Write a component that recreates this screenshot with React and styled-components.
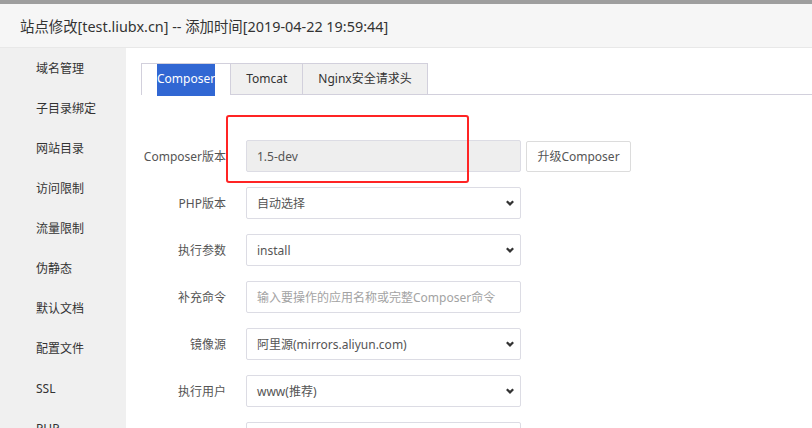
import React from "react";
import styled, { createGlobalStyle } from "styled-components";

const GlobalStyle = createGlobalStyle`
    html, body {
        margin: 0;
        padding: 0;
        height: 428px;
        overflow: hidden;
        background: #fff;
        font-family: "Noto Sans", "Noto Sans CJK SC", sans-serif;
    }
`

const Window = styled.div`
    width: 812px;
    height: 428px;
    display: flex;
    flex-direction: column;
    border-top: 4px solid #9e9e9e;
    box-sizing: border-box;
    overflow: hidden;
`

const Header = styled.div`
    height: 43px;
    flex-shrink: 0;
    display: flex;
    align-items: center;
    padding-left: 20px;
    background: #f6f6f6;
    border-bottom: 1px solid #e8e8e8;
    font-size: 14.4px;
    color: #333;
`

const Body = styled.div`
    flex: 1;
    display: flex;
    min-height: 0;
`

const Sidebar = styled.ul`
    width: 126px;
    flex-shrink: 0;
    margin: 0;
    padding: 0;
    list-style: none;
    background: #f0f0f0;
`

const SideItem = styled.li`
    height: 40px;
    line-height: 42px;
    padding-left: 36px;
    font-size: 12px;
    color: #333;
`

const Content = styled.div`
    flex: 1;
    padding: 15px 0 0 15px;
    position: relative;
`

const TabBar = styled.div`
    display: flex;
    height: 31px;
    border-bottom: 1px solid #d2d0dc;
`

const Tab = styled.div`
    box-sizing: border-box;
    padding: 0 15px;
    font-size: 12px;
    line-height: 30px;
    color: #333;
    border: 1px solid #d2d0dc;
    border-left-width: ${p => (p.$first ? "1px" : "0")};
    border-bottom: none;
    background: ${p => (p.$active ? "#fff" : "#f0f0f0")};
    height: ${p => (p.$active ? "32px" : "31px")};
    position: relative;
`

const Selected = styled.span`
    display: inline-block;
    height: 32px;
    line-height: 30px;
    background: #3167d3;
    color: #fff;
`

const Form = styled.div`
    display: flex;
    flex-direction: column;
    gap: 15px;
    margin-top: 45px;
    margin-left: -15px;
`

const Row = styled.div`
    display: flex;
    align-items: center;
    height: 32px;
`

const Label = styled.label`
    width: 100px;
    text-align: right;
    font-size: 12px;
    color: #555;
    margin-right: 20px;
    white-space: nowrap;
`

const Field = styled.div`
    width: 275px;
    height: 32px;
    box-sizing: border-box;
    border: 1px solid #dcdce4;
    border-radius: 2px;
    background: ${p => (p.$disabled ? "#eeeeee" : "#fff")};
    display: flex;
    align-items: center;
    justify-content: space-between;
    padding: 0 5px 0 10px;
    font-size: 12px;
    color: ${p => (p.$placeholder ? "#a3a3a3" : "#555")};
    white-space: nowrap;
`

const Button = styled.div`
    margin-left: 5px;
    width: 105px;
    height: 31px;
    box-sizing: border-box;
    border: 1px solid #dcdcdc;
    border-radius: 2px;
    background: #fff;
    display: flex;
    align-items: center;
    justify-content: center;
    font-size: 12px;
    color: #555;
`

const Highlight = styled.div`
    position: absolute;
    left: 100px;
    top: 67px;
    width: 243px;
    height: 68px;
    box-sizing: border-box;
    border: 2.5px solid #ff2424;
    border-radius: 3px;
    pointer-events: none;
`

const Chevron = () => (
    <svg width="10" height="8" viewBox="0 0 10 8">
        <path d="M1.8 2.2 L5 5.4 L8.2 2.2" fill="none" stroke="#333" strokeWidth="2.2" />
    </svg>
)

const menu = ["域名管理", "子目录绑定", "网站目录", "访问限制", "流量限制", "伪静态", "默认文档", "配置文件", "SSL", "PHP"];

const rows = [
    { label: "PHP版本", value: "自动选择", select: true },
    { label: "执行参数", value: "install", select: true },
    { label: "补充命令", value: "输入要操作的应用名称或完整Composer命令", placeholder: true },
    { label: "镜像源", value: "阿里源(mirrors.aliyun.com)", select: true },
    { label: "执行用户", value: "www(推荐)", select: true },
    { label: "", value: "", select: false },
];

export default function App() {
    return (
        <>
            <GlobalStyle />
            <Window>
                <Header>站点修改[test.liubx.cn] -- 添加时间[2019-04-22 19:59:44]</Header>
                <Body>
                    <Sidebar>
                        {menu.map(m => <SideItem key={m}>{m}</SideItem>)}
                    </Sidebar>
                    <Content>
                        <TabBar>
                            <Tab $first $active><Selected>Composer</Selected></Tab>
                            <Tab>Tomcat</Tab>
                            <Tab>Nginx安全请求头</Tab>
                        </TabBar>
                        <Form>
                            <Row>
                                <Label>Composer版本</Label>
                                <Field $disabled>1.5-dev</Field>
                                <Button>升级Composer</Button>
                            </Row>
                            {rows.map((r, i) => (
                                <Row key={i}>
                                    <Label>{r.label}</Label>
                                    <Field $placeholder={r.placeholder}>
                                        <span>{r.value}</span>
                                        {r.select && <Chevron />}
                                    </Field>
                                </Row>
                            ))}
                        </Form>
                        <Highlight />
                    </Content>
                </Body>
            </Window>
        </>
    );
}
